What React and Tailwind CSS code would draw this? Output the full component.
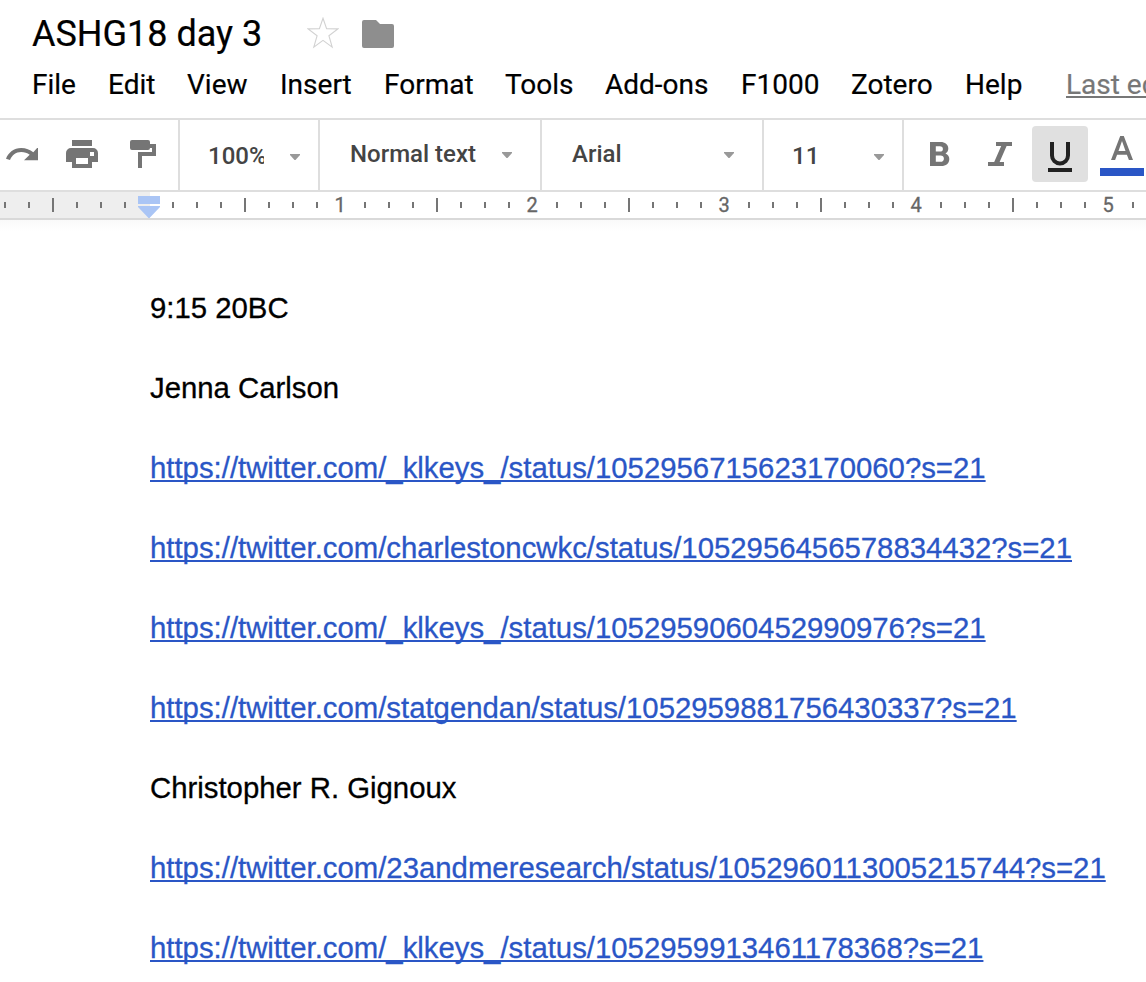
const MENUS = [
  { label: "File", cell: "w-[76px]" },
  { label: "Edit", cell: "w-[79px]" },
  { label: "View", cell: "w-[93px]" },
  { label: "Insert", cell: "w-[104px]" },
  { label: "Format", cell: "w-[121px]" },
  { label: "Tools", cell: "w-[100px]" },
  { label: "Add-ons", cell: "w-[136px]" },
  { label: "F1000", cell: "w-[110px]" },
  { label: "Zotero", cell: "w-[114px]" },
  { label: "Help", cell: "w-[101px]" },
];

const PARAGRAPHS = [
  { text: "9:15 20BC" },
  { text: "Jenna Carlson" },
  { text: "https://twitter.com/_klkeys_/status/1052956715623170060?s=21", link: true },
  { text: "https://twitter.com/charlestoncwkc/status/1052956456578834432?s=21", link: true },
  { text: "https://twitter.com/_klkeys_/status/1052959060452990976?s=21", link: true },
  { text: "https://twitter.com/statgendan/status/1052959881756430337?s=21", link: true },
  { text: "Christopher R. Gignoux" },
  { text: "https://twitter.com/23andmeresearch/status/1052960113005215744?s=21", link: true },
  { text: "https://twitter.com/_klkeys_/status/1052959913461178368?s=21", link: true },
];

// Eighth-inch steps, starting left of the ruler's origin.
const STEPS = Array.from({ length: 48 }, (_, i) => i - 6);

function Caret({ className }) {
  return (
    <svg width="10" height="6" viewBox="0 0 10 6" className={className} aria-hidden="true">
      <path d="M0 0h10v1L5.5 6h-1L0 1z" fill="#999" />
    </svg>
  );
}

function Header() {
  return (
    <header className="h-[118px] shrink-0 overflow-hidden">
      <div className="flex h-[64px] items-start pl-8">
        <h1 className="w-[275px] pt-[13px] text-[36px] leading-[42px] whitespace-nowrap [-webkit-text-stroke:0.2px]">
          ASHG18 day 3
        </h1>
        <svg width="32" height="32" viewBox="0 0 32 32" className="mt-[17px]" aria-hidden="true">
          <path
            d="M16 1.2l3.6 10.6 11.2.1-8.9 6.8 3.3 11.4L16 23.4l-9.2 6.7 3.3-11.4-8.9-6.8 11.2-.1z"
            fill="none"
            stroke="#d2d2d2"
            strokeWidth="1.1"
          />
        </svg>
        <svg width="32" height="28" viewBox="0 0 32 28" className="mt-[20px] ml-[23px]" aria-hidden="true">
          <path
            d="M2 0h12l4 4h12a2 2 0 0 1 2 2v20a2 2 0 0 1-2 2H2a2 2 0 0 1-2-2V2a2 2 0 0 1 2-2z"
            fill="#8e8e8e"
          />
        </svg>
      </div>
      <nav className="flex pt-[4px] pl-8 text-[28px] leading-[34px] whitespace-nowrap [-webkit-text-stroke:0.2px]">
        {MENUS.map((m) => (
          <span key={m.label} className={`${m.cell} shrink-0`}>
            {m.label}
          </span>
        ))}
        <span className="text-[#777] underline decoration-2 underline-offset-[2px]">Last edit</span>
      </nav>
    </header>
  );
}

function Toolbar() {
  return (
    <div className="flex h-[74px] shrink-0 overflow-hidden border-y-2 border-[#dedede] text-[24px] leading-[28px] font-medium text-[#444]">
      <div className="flex w-[180px] shrink-0 items-start border-r-2 border-[#dedede] pt-[20px] pl-[6px]">
        <svg width="32" height="13" viewBox="0 0 32 13" className="mt-[8px]" fill="#757575" aria-hidden="true">
          <path d="M27.3 4.3C24 1.6 20 0 15.2 0 8 0 2.2 4.6 0 10.8l4 1.3C5.6 7.5 9.9 4 15.2 4c3.4 0 6 1 8.500 2.800L18 12.200h14V-1z" />
        </svg>
        <svg width="32" height="28" viewBox="0 0 32 28" className="ml-[28px]" fill="#757575" fillRule="evenodd" aria-hidden="true">
          <path d="M6 0h20v6H6zM5 8h22a5 5 0 0 1 5 5v9h-6v6H6v-6H0v-9a5 5 0 0 1 5-5zm5 10v6h12v-6zm14-6v4h4v-4z" />
        </svg>
        <svg width="26" height="28" viewBox="0 0 26 28" className="ml-[32px]" fill="#757575" aria-hidden="true">
          <path d="M2 0h16a2 2 0 0 1 2 2v2h6v12H12v12H8V12h14V8h-2a2 2 0 0 1-2 2H2a2 2 0 0 1-2-2V2a2 2 0 0 1 2-2z" />
        </svg>
      </div>
      <div className="flex w-[140px] shrink-0 border-r-2 border-[#dedede] pl-[28px]">
        <span className="mt-[22px] h-[28px] w-[56px] overflow-hidden">100%</span>
        <Caret className="mt-[34px] ml-[26px]" />
      </div>
      <div className="flex w-[222px] shrink-0 border-r-2 border-[#dedede] pl-[30px]">
        <span className="mt-[20px] w-[152px] whitespace-nowrap">Normal text</span>
        <Caret className="mt-[32px]" />
      </div>
      <div className="flex w-[222px] shrink-0 border-r-2 border-[#dedede] pl-[30px]">
        <span className="mt-[20px] w-[152px]">Arial</span>
        <Caret className="mt-[32px]" />
      </div>
      <div className="flex w-[140px] shrink-0 border-r-2 border-[#dedede] pl-[28px]">
        <span className="mt-[22px] w-[82px]">11</span>
        <Caret className="mt-[34px]" />
      </div>
      <div className="flex shrink-0 items-start pl-[26px]">
        <svg width="20" height="24" viewBox="0 0 20 24" className="mt-[22px]" fill="#757575" fillRule="evenodd" aria-hidden="true">
          <path d="M0 0h10.500c4.500 0 7.800 2.500 7.800 6.500 0 2.300-1 4-2.800 5 2.500 1 3.800 3 3.800 5.500 0 4.500-3.300 7-8 7H0zm5.800 4.200v5.400h4.100c1.900 0 3-1 3-2.700s-1.100-2.700-3-2.700zm0 9.400v6.200h4.700c2.100 0 3.400-1.100 3.400-3.100s-1.300-3.100-3.400-3.100z" />
        </svg>
        <svg width="24" height="24" viewBox="0 0 24 24" className="mt-[22px] ml-[38px]" fill="#757575" aria-hidden="true">
          <path d="M8 0h16v4h-5.400l-7 16H16v4H0v-4h6.200l7-16H8z" />
        </svg>
        <div className="mt-[6px] ml-[20px] flex h-[56px] w-[56px] justify-center rounded-[4px] bg-[#e0e0e0] pt-[16px]">
          <svg width="24" height="30" viewBox="0 0 24 30" aria-hidden="true">
            <path d="M4 0v13.500a8 8 0 0 0 16 0V0" fill="none" stroke="#212121" strokeWidth="4" />
            <path d="M0 26h24v4H0z" fill="#212121" />
          </svg>
        </div>
        <div className="mt-[16px] ml-[12px] flex w-[44px] flex-col items-center">
          <svg width="22" height="24" viewBox="0 0 22 24" fill="#757575" fillRule="evenodd" aria-hidden="true">
            <path d="M9.200 0h3.600L22 24h-4.100l-2-5.300H6.100L4.100 24H0zM7.500 15h7L11 5z" />
          </svg>
          <div className="mt-[8px] h-[8px] w-[44px] bg-[#2a56c6]" />
        </div>
      </div>
    </div>
  );
}

function RulerStep({ step }) {
  if (step === 0) {
    return (
      <div className="flex w-6 shrink-0 justify-center pt-[4px]">
        <svg width="22" height="22" viewBox="0 0 22 22" className="shrink-0" fill="#aac5f5" aria-hidden="true">
          <path d="M0 0h22v8H0zM0 10h22v1L11.500 22h-1L0 11z" />
        </svg>
      </div>
    );
  }
  if (step > 0 && step % 8 === 0) {
    return (
      <div className="w-6 shrink-0 pt-px pr-[2px] text-center text-[20px] leading-6 text-[#666] [-webkit-text-stroke:0.3px]">
        {step / 8}
      </div>
    );
  }
  return (
    <div className="flex w-6 shrink-0 items-center justify-center">
      <div className={step % 4 === 0 ? "h-[14px] w-[2px] bg-[#757575]" : "h-[6px] w-[2px] bg-[#757575]"} />
    </div>
  );
}

function Ruler() {
  return (
    <div className="h-[28px] shrink-0 overflow-hidden border-b-2 border-[#d9d9d9] bg-[linear-gradient(to_right,#eeeeee_150px,#ffffff_150px)]">
      <div className="-ml-[7px] flex h-[26px]">
        {STEPS.map((s) => (
          <RulerStep key={s} step={s} />
        ))}
      </div>
    </div>
  );
}

export default function App() {
  return (
    <div className="flex h-[982px] w-[1146px] flex-col overflow-hidden bg-white font-['Roboto',sans-serif] text-black">
      <Header />
      <Toolbar />
      <Ruler />
      <main className="min-h-0 flex-1 overflow-hidden bg-[linear-gradient(to_bottom,#f9f9f9,#ffffff_12px)] pt-[68px] pl-[150px] font-['Liberation_Sans',Arial,sans-serif] text-[29.333px] leading-[40px] [-webkit-text-stroke:0.3px]">
        {PARAGRAPHS.map((p) => (
          <p key={p.text} className="mb-[40px] whitespace-nowrap">
            {p.link ? (
              <a className="text-[#2a56c6] underline decoration-2 underline-offset-[2px] [text-decoration-skip-ink:none]">
                {p.text}
              </a>
            ) : (
              p.text
            )}
          </p>
        ))}
      </main>
    </div>
  );
}
